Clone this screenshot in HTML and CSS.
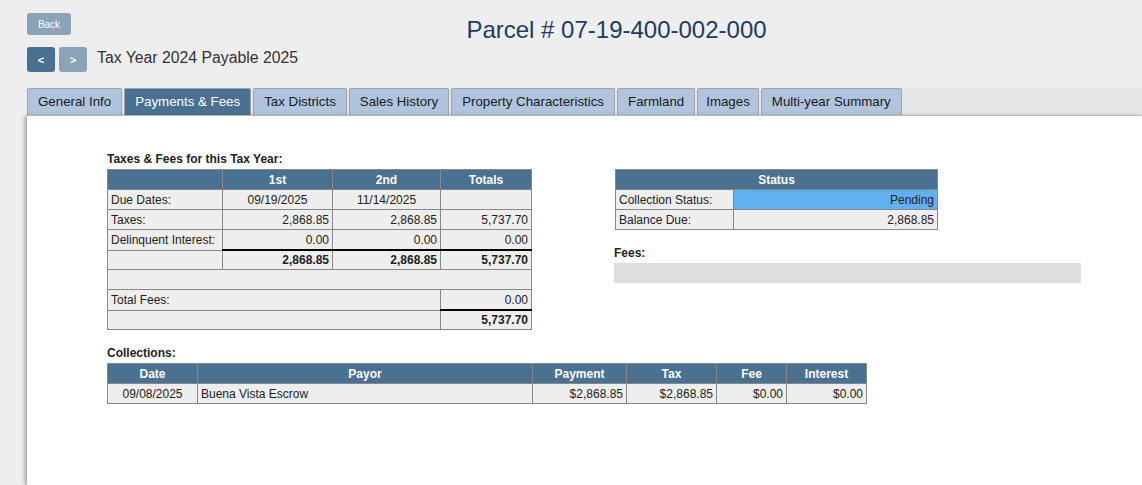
FILE: index.html
```html
<!DOCTYPE html>
<html>
<head>
<meta charset="utf-8">
<link rel="stylesheet" href="styles.css">
</head>
<body>
<header class="header">
  <div class="top-row">
    <button class="btn btn-light btn-back">Back</button>
    <h1 class="title">Parcel # 07-19-400-002-000</h1>
  </div>
  <div class="nav-row">
    <button class="btn btn-dark btn-nav">&lt;</button>
    <button class="btn btn-light btn-nav">&gt;</button>
    <span class="tax-year">Tax Year 2024 Payable 2025</span>
  </div>
</header>
<nav class="tabs">
  <a class="tab">General Info</a>
  <a class="tab active">Payments &amp; Fees</a>
  <a class="tab">Tax Districts</a>
  <a class="tab">Sales History</a>
  <a class="tab">Property Characteristics</a>
  <a class="tab">Farmland</a>
  <a class="tab tab-narrow">Images</a>
  <a class="tab">Multi-year Summary</a>
</nav>
<main class="panel">
  <div class="columns">
    <section class="left">
      <div class="label">Taxes &amp; Fees for this Tax Year:</div>
      <table class="grid taxes">
        <colgroup><col class="c1"><col class="c2"><col class="c3"><col class="c4"></colgroup>
        <tr><th></th><th>1st</th><th>2nd</th><th>Totals</th></tr>
        <tr><td>Due Dates:</td><td class="center">09/19/2025</td><td class="center">11/14/2025</td><td></td></tr>
        <tr><td>Taxes:</td><td class="num">2,868.85</td><td class="num">2,868.85</td><td class="num">5,737.70</td></tr>
        <tr><td>Delinquent Interest:</td><td class="num">0.00</td><td class="num">0.00</td><td class="num">0.00</td></tr>
        <tr class="thick"><td></td><td class="num sum">2,868.85</td><td class="num sum">2,868.85</td><td class="num sum">5,737.70</td></tr>
        <tr><td colspan="4"></td></tr>
        <tr><td colspan="3">Total Fees:</td><td class="num">0.00</td></tr>
        <tr class="thick"><td colspan="3"></td><td class="num sum">5,737.70</td></tr>
      </table>
    </section>
    <section class="right">
      <table class="grid status">
        <colgroup><col class="s1"><col class="s2"></colgroup>
        <tr><th colspan="2">Status</th></tr>
        <tr><td>Collection Status:</td><td class="num pending">Pending</td></tr>
        <tr><td>Balance Due:</td><td class="num">2,868.85</td></tr>
      </table>
      <div class="label fees-label">Fees:</div>
      <div class="fees-bar"></div>
    </section>
  </div>
  <div class="label coll-label">Collections:</div>
  <table class="grid collections">
    <colgroup><col class="k1"><col class="k2"><col class="k3"><col class="k4"><col class="k5"><col class="k6"></colgroup>
    <tr><th>Date</th><th>Payor</th><th>Payment</th><th>Tax</th><th>Fee</th><th>Interest</th></tr>
    <tr><td class="center">09/08/2025</td><td>Buena Vista Escrow</td><td class="num">$2,868.85</td><td class="num">$2,868.85</td><td class="num">$0.00</td><td class="num">$0.00</td></tr>
  </table>
</main>
</body>
</html>
```
FILE: styles.css
```css
html, body {
  margin: 0;
  padding: 0;
  height: 100%;
}
body {
  background: #eeeeee;
  font-family: "Liberation Sans", Arial, sans-serif;
  color: #222;
  display: flex;
  flex-direction: column;
  overflow: hidden;
}
.header {
  padding: 13px 0 0 27px;
}
.top-row {
  display: flex;
  align-items: flex-start;
}
.btn {
  border: none;
  border-radius: 3px;
  color: #fff;
  font-family: "Liberation Sans", Arial, sans-serif;
  padding: 0;
  cursor: pointer;
}
.btn-light { background: #8aa3b9; }
.btn-dark { background: #4a7192; }
.btn-back {
  width: 44px;
  height: 22px;
  font-size: 10px;
}
.title {
  flex: 1;
  margin: 3px 0 0 0;
  padding-left: 20px;
  text-align: center;
  font-size: 24px;
  line-height: 28px;
  font-weight: normal;
  color: #1f3a64;
}
.nav-row {
  display: flex;
  align-items: center;
  gap: 4px;
  margin-top: 3px;
}
.btn-nav {
  width: 28px;
  height: 25px;
  font-size: 11px;
  font-weight: bold;
}
.tax-year {
  margin-left: 6px;
  padding-bottom: 3px;
  font-size: 15.8px;
  color: #333;
}
.tabs {
  display: flex;
  gap: 2px;
  margin: 16px 0 0 27px;
  background: #e6e6e6;
  border-bottom: 1px solid #d6d6d6;
  height: 27px;
}
.tab {
  display: flex;
  align-items: center;
  padding: 0 10px 1px;
  height: 25px;
  background: #b0c4de;
  border: 1px solid #a3a3a3;
  border-bottom: none;
  border-radius: 2px 2px 0 0;
  font-size: 13.3px;
  color: #1a1a1a;
}
.tab.tab-narrow {
  padding: 0 8px 1px;
}
.tab.active {
  background: #4a7192;
  color: #fff;
}
.panel {
  flex: 1;
  margin-left: 27px;
  background: #fff;
  box-shadow: -2px 0 4px rgba(0,0,0,0.35);
  padding: 36px 0 0 80px;
}
.columns {
  display: flex;
  gap: 82px;
}
.label {
  font-size: 12px;
  font-weight: bold;
  line-height: 14px;
  margin-bottom: 3px;
  color: #222;
}
.grid {
  border-collapse: collapse;
  font-size: 12px;
  table-layout: fixed;
}
.grid th {
  background: #4a7192;
  color: #fff;
  font-weight: bold;
  height: 19px;
  padding: 0 3px;
  border: 1px solid #888;
  text-align: center;
}
.grid td {
  background: #eeeeee;
  border: 1px solid #888;
  height: 19px;
  padding: 0 3px;
  color: #222;
}
.grid tr.thick td { height: 18px; }
.grid .num { text-align: right; }
.grid .center { text-align: center; }
.grid td.sum {
  font-weight: bold;
  border-top: 2px solid #000;
}
.taxes { width: 424px; }
.taxes .c1 { width: 115px; }
.taxes .c2 { width: 110px; }
.taxes .c3 { width: 108px; }
.taxes .c4 { width: 91px; }
.right {
  width: 467px;
  padding-top: 17px;
}
.status {
  width: 323px;
  margin-left: 1px;
}
.status .s1 { width: 118px; }
.grid td.pending { background: #63b0f0; }
.fees-label {
  margin-top: 16px;
  margin-bottom: 3px;
}
.fees-bar {
  height: 20px;
  background: #dedede;
}
.coll-label {
  margin-top: 16px;
}
.collections {
  width: 759px;
}
.collections .k1 { width: 90px; }
.collections .k2 { width: 335px; }
.collections .k3 { width: 94px; }
.collections .k4 { width: 90px; }
.collections .k5 { width: 70px; }
.collections .k6 { width: 80px; }
```
